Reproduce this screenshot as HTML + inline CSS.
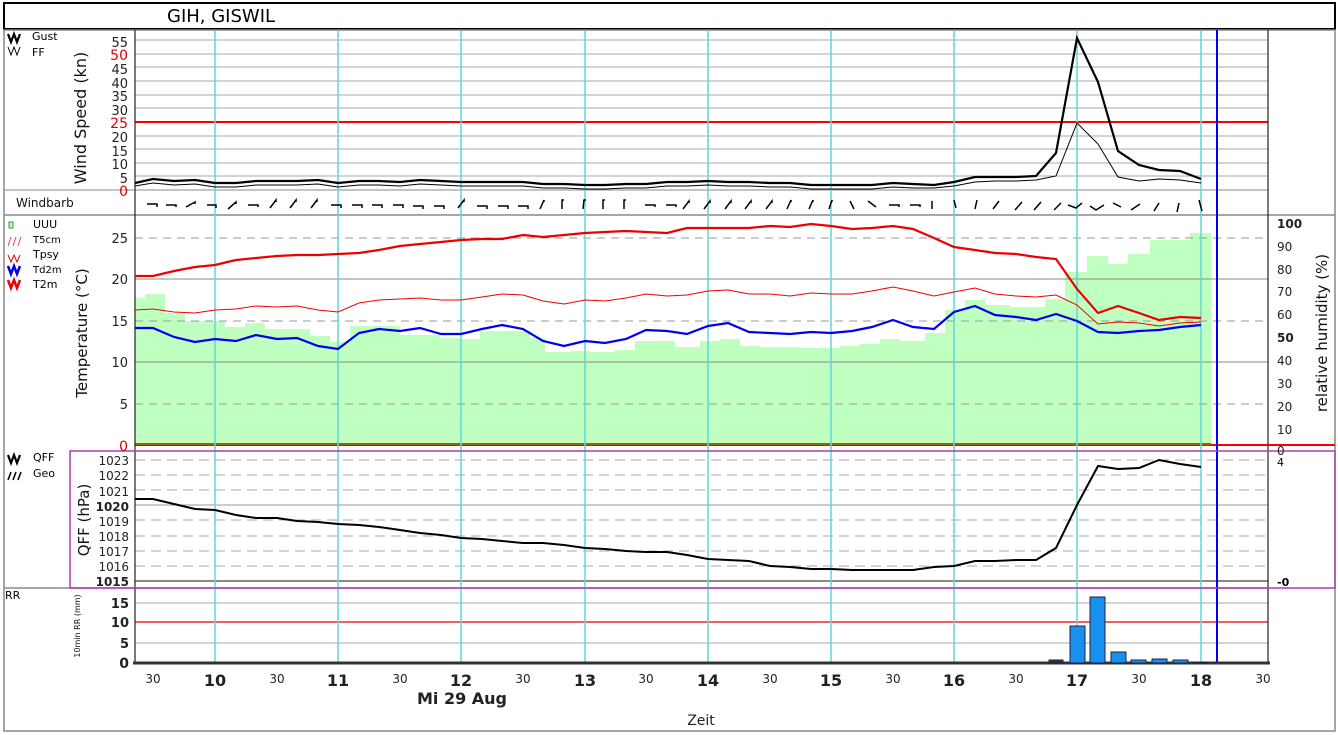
<!DOCTYPE html>
<html><head><meta charset="utf-8"><style>
html,body{margin:0;padding:0;background:#fff;}
svg{display:block;font-family:"DejaVu Sans","Liberation Sans",sans-serif;}
</style></head><body>
<svg width="1338" height="735" viewBox="0 0 1338 735" xmlns="http://www.w3.org/2000/svg">
<rect x="0" y="0" width="1338" height="735" fill="#fff"/>
<!-- title -->
<rect x="4" y="3" width="1331" height="26" fill="#fff" stroke="#000" stroke-width="2"/>
<text x="167" y="22" font-size="18" fill="#000">GIH, GISWIL</text>
<rect x="4" y="30" width="1331" height="701" fill="none" stroke="#888" stroke-width="1.5"/>

<!-- humidity bars -->
<path fill="#bfffbf" d="M135 445 V298 H145 V294 H165 V313 H185 V321 H225 V327 H245 V323 H265 V329 H310 V336 H330 V342 H350 V326 H400 V335 H440 V338 H460 V339 H480 V331 H530 V338 H545 V352 H570 V351 H590 V352 H615 V350 H635 V341 H675 V347 H700 V341 H720 V339 H740 V346 H760 V347 H800 V348 H840 V346 H860 V344 H880 V339 H900 V341 H925 V333 H945 V310 H965 V300 H985 V305 H1010 V307 H1045 V299 H1065 V272 H1087 V256 H1108 V264 H1128 V254 H1150 V240 H1190 V233 H1211 V445 Z"/>

<!-- wind grid -->
<g stroke="#aaa" stroke-width="1">
<line x1="135" y1="40" x2="1268" y2="40"/><line x1="135" y1="54" x2="1268" y2="54"/><line x1="135" y1="67" x2="1268" y2="67"/><line x1="135" y1="81" x2="1268" y2="81"/><line x1="135" y1="95" x2="1268" y2="95"/><line x1="135" y1="108" x2="1268" y2="108"/><line x1="135" y1="136" x2="1268" y2="136"/><line x1="135" y1="149" x2="1268" y2="149"/><line x1="135" y1="163" x2="1268" y2="163"/><line x1="135" y1="176" x2="1268" y2="176"/>
</g>
<line x1="135" y1="122" x2="1268" y2="122" stroke="#f00" stroke-width="2"/>
<line x1="4" y1="190" x2="1268" y2="190" stroke="#888" stroke-width="1"/>
<line x1="4" y1="215" x2="1335" y2="215" stroke="#888" stroke-width="1.5"/>

<!-- temp grid -->
<g stroke="#999" stroke-width="1" stroke-dasharray="8,6">
<line x1="135" y1="238" x2="1268" y2="238"/><line x1="135" y1="321" x2="1268" y2="321"/><line x1="135" y1="404" x2="1268" y2="404"/>
</g>
<g stroke="#888" stroke-width="1">
<line x1="135" y1="279" x2="1268" y2="279"/><line x1="135" y1="362" x2="1268" y2="362"/>
</g>
<line x1="135" y1="445" x2="1268" y2="445" stroke="#f00" stroke-width="2"/>
<line x1="135" y1="444" x2="1211" y2="444" stroke="#a06000" stroke-width="2"/>

<!-- qff grid -->
<g stroke="#aaa" stroke-width="1" stroke-dasharray="10,6">
<line x1="135" y1="460" x2="1268" y2="460"/><line x1="135" y1="475" x2="1268" y2="475"/><line x1="135" y1="490" x2="1268" y2="490"/><line x1="135" y1="520" x2="1268" y2="520"/><line x1="135" y1="536" x2="1268" y2="536"/><line x1="135" y1="551" x2="1268" y2="551"/><line x1="135" y1="566" x2="1268" y2="566"/>
</g>
<line x1="135" y1="505" x2="1268" y2="505" stroke="#999"/>
<line x1="135" y1="581" x2="1268" y2="581" stroke="#888" stroke-width="2"/>
<line x1="4" y1="588" x2="1268" y2="588" stroke="#888" stroke-width="1.5"/>

<!-- rr grid -->
<line x1="135" y1="603" x2="1268" y2="603" stroke="#aaa"/>
<line x1="135" y1="622" x2="1268" y2="622" stroke="#e00" stroke-width="1.2"/>
<line x1="135" y1="643" x2="1268" y2="643" stroke="#aaa"/>

<!-- vertical hour lines -->
<g stroke="#5fd8d8" stroke-width="1.5">
<line x1="215" y1="30" x2="215" y2="663"/><line x1="338" y1="30" x2="338" y2="663"/><line x1="461" y1="30" x2="461" y2="663"/><line x1="585" y1="30" x2="585" y2="663"/><line x1="708" y1="30" x2="708" y2="663"/><line x1="831" y1="30" x2="831" y2="663"/><line x1="954" y1="30" x2="954" y2="663"/><line x1="1077" y1="30" x2="1077" y2="663"/><line x1="1201" y1="30" x2="1201" y2="663"/>
</g>
<line x1="1217" y1="30" x2="1217" y2="663" stroke="#0000ee" stroke-width="2"/>

<!-- axes -->
<line x1="135" y1="30" x2="135" y2="663" stroke="#222" stroke-width="1.2"/>
<line x1="1268" y1="30" x2="1268" y2="663" stroke="#222" stroke-width="1.2"/>
<line x1="133" y1="663" x2="1270" y2="663" stroke="#333" stroke-width="3"/>
<rect x="70" y="451" width="1265" height="137" fill="none" stroke="#b03cb0" stroke-width="1.5"/>
<line x1="1268" y1="445" x2="1335" y2="445" stroke="#f00" stroke-width="2"/>

<!-- wind lines -->
<polyline fill="none" stroke="#000" stroke-width="1" points="135,186 153,183 174,185 195,184 215,187 236,187 256,185 277,185 297,185 318,184 338,187 359,185 379,185 400,186 420,184 441,185 461,186 482,186 502,186 523,186 543,188 564,188 585,189 605,189 626,188 646,188 667,186 687,186 708,185 728,186 749,186 770,187 790,187 811,189 831,189 852,189 872,189 893,187 913,188 934,188 954,186 975,182 995,181 1016,181 1036,180 1056,176 1077,123 1098,144 1118,177 1139,181 1159,179 1180,180 1201,183"/>
<polyline fill="none" stroke="#000" stroke-width="2.2" points="135,183 153,179 174,181 195,180 215,183 236,183 256,181 277,181 297,181 318,180 338,183 359,181 379,181 400,182 420,180 441,181 461,182 482,182 502,182 523,182 543,184 564,184 585,185 605,185 626,184 646,184 667,182 687,182 708,181 728,182 749,182 770,183 790,183 811,185 831,185 852,185 872,185 893,183 913,184 934,185 954,182 975,177 995,177 1016,177 1036,176 1056,153 1077,38 1098,82 1118,151 1139,165 1159,170 1180,171 1201,179"/>

<!-- wind barbs -->
<g stroke="#000" stroke-width="1.5" fill="none">
<path d="M147 204h10v3M166 205h10v2M186 207l9-5v2M207 205h9v3M228 209l8-7v2M248 205h10v2M270 208l6-8v2M290 208l6-8v2M311 208l6-8v2M331 205h10v3M352 205h10v3M372 205h10v3M393 205h10v3M413 206h10v3M434 206h10v3M458 208l6-8v2M477 206h10v3M498 206h10v3M518 206h10v3M540 209l4-9v2M562 209v-9h2M583 209l1-9h2M603 209v-9h2M624 209v-9h2M645 205h10v2M666 205h10v2M683 209l6-8v2M704 209l6-8v2M725 209l6-8v2M745 209l6-8v2M766 209l6-8v2M787 209l4-9v2M809 209l4-9v2M829 209l3-9v2M850 201l4 8M868 201l8 6M889 205h10v2M910 205h10v2M932 201v8M954 200l2 8M975 209l2-9M993 209l6-8M1015 210l7-8M1034 210l7-8M1054 210l7-7M1068 205l8 3l6-5M1090 206l6 4l8-5M1113 203l8 4M1131 210l9-6M1154 211l5-8M1177 212l2-9M1199 200l3 11"/>
</g>

<!-- temperature lines -->
<polyline fill="none" stroke="#ee0000" stroke-width="1" points="135,310 153,309 174,312 195,313 215,310 236,309 256,306 277,307 297,306 318,310 338,312 359,303 379,300 400,299 420,298 441,300 461,300 482,297 502,294 523,295 543,301 564,304 585,300 605,301 626,298 646,294 667,296 687,295 708,291 728,290 749,294 770,294 790,296 811,293 831,294 852,294 872,291 893,287 913,291 934,296 954,292 975,288 995,294 1016,296 1036,297 1056,295 1077,305 1098,324 1118,322 1139,323 1159,326 1180,323 1201,322"/>
<polyline fill="none" stroke="#0000ee" stroke-width="2.2" points="135,328 153,328 174,337 195,342 215,339 236,341 256,335 277,339 297,338 318,346 338,349 359,333 379,329 400,331 420,328 441,334 461,334 482,329 502,325 523,329 543,341 564,346 585,341 605,343 626,339 646,330 667,331 687,334 708,326 728,323 749,332 770,333 790,334 811,332 831,333 852,331 872,327 893,320 913,327 934,329 954,312 975,306 995,315 1016,317 1036,320 1056,314 1077,321 1098,332 1118,333 1139,331 1159,330 1180,327 1201,325"/>
<polyline fill="none" stroke="#ee0000" stroke-width="2.2" points="135,276 153,276 174,271 195,267 215,265 236,260 256,258 277,256 297,255 318,255 338,254 359,253 379,250 400,246 420,244 441,242 461,240 482,239 502,239 523,235 543,237 564,235 585,233 605,232 626,231 646,232 667,233 687,228 708,228 728,228 749,228 770,226 790,227 811,224 831,226 852,229 872,228 893,226 913,229 934,238 954,247 975,250 995,253 1016,254 1036,257 1056,259 1077,289 1098,313 1118,306 1139,313 1159,320 1180,317 1201,318"/>

<!-- QFF line -->
<polyline fill="none" stroke="#000" stroke-width="2" points="135,499 153,499 174,504 195,509 215,510 236,515 256,518 277,518 297,521 318,522 338,524 359,525 379,527 400,530 420,533 441,535 461,538 482,539 502,541 523,543 543,543 564,545 585,548 605,549 626,551 646,552 667,552 687,555 708,559 728,560 749,561 770,566 790,567 811,569 831,569 852,570 872,570 893,570 913,570 934,567 954,566 975,561 995,561 1016,560 1036,560 1056,548 1077,505 1098,466 1118,469 1139,468 1159,460 1180,464 1201,467"/>

<!-- RR bars -->
<g fill="#1890f0" stroke="#224" stroke-width="1">
<rect x="1049" y="660" width="14" height="3" fill="#333"/>
<rect x="1070" y="626" width="15" height="37"/>
<rect x="1090" y="597" width="15" height="66"/>
<rect x="1111" y="652" width="15" height="11"/>
<rect x="1131" y="660" width="15" height="3"/>
<rect x="1152" y="659" width="15" height="4"/>
<rect x="1173" y="660" width="15" height="3"/>
<rect x="1193" y="662" width="15" height="1" fill="#333"/>
</g>

<!-- wind axis labels -->
<g font-size="13" text-anchor="end" fill="#222">
<text x="128" y="47">55</text><text x="128" y="60" fill="#d00" font-size="14">50</text><text x="128" y="74">45</text><text x="128" y="88">40</text><text x="128" y="101">35</text><text x="128" y="115">30</text><text x="128" y="128" fill="#d00" font-size="14">25</text><text x="128" y="142">20</text><text x="128" y="156">15</text><text x="128" y="169">10</text><text x="128" y="183">5</text><text x="128" y="196" fill="#d00" font-size="14">0</text>
</g>
<text transform="translate(86,118) rotate(-90)" font-size="16" text-anchor="middle" fill="#111">Wind Speed (kn)</text>
<text x="16" y="207" font-size="12" fill="#111">Windbarb</text>
<!-- wind legend -->
<path d="M8 34l3 8 3-8 3 8 3-8" stroke="#000" stroke-width="2.2" fill="none"/>
<path d="M8 47l3 8 3-8 3 8 3-8" stroke="#000" stroke-width="1" fill="none"/>
<text x="32" y="40" font-size="11">Gust</text><text x="32" y="56" font-size="11">FF</text>

<!-- temp legend -->
<rect x="9" y="222" width="4" height="6" fill="#bfffbf" stroke="#080" stroke-width=".8"/>
<text x="33" y="228" font-size="11">UUU</text>
<path d="M8 246l3-9M13 246l3-9M18 246l3-9" stroke="#e44" stroke-width="1"/>
<text x="33" y="243" font-size="10">T5cm</text>
<path d="M8 255l3 7 3-7 3 7 3-7" stroke="#e00" stroke-width="1" fill="none"/>
<text x="33" y="258" font-size="11">Tpsy</text>
<path d="M8 266l3 8 3-8 3 8 3-8" stroke="#00e" stroke-width="2.5" fill="none"/>
<text x="33" y="273" font-size="10">Td2m</text>
<path d="M8 280l3 8 3-8 3 8 3-8" stroke="#e00" stroke-width="2.5" fill="none"/>
<text x="33" y="288" font-size="11">T2m</text>

<!-- temp axis -->
<g font-size="13" text-anchor="end" fill="#222">
<text x="128" y="243">25</text><text x="128" y="284">20</text><text x="128" y="326">15</text><text x="128" y="367">10</text><text x="128" y="409">5</text><text x="128" y="451" fill="#d00" font-size="14">0</text>
</g>
<text transform="translate(87,333) rotate(-90)" font-size="15" text-anchor="middle" fill="#111">Temperature (°C)</text>
<!-- humidity axis -->
<g font-size="12" fill="#222">
<text x="1277" y="228" font-weight="bold">100</text><text x="1277" y="251">90</text><text x="1277" y="274">80</text><text x="1277" y="296">70</text><text x="1277" y="319">60</text><text x="1277" y="342" font-weight="bold">50</text><text x="1277" y="365">40</text><text x="1277" y="388">30</text><text x="1277" y="411">20</text><text x="1277" y="434">10</text><text x="1277" y="455">0</text>
</g>
<text transform="translate(1327,333) rotate(-90)" font-size="15" text-anchor="middle" fill="#111">relative humidity (%)</text>

<!-- QFF legend & axis -->
<path d="M8 455l3 8 3-8 3 8 3-8" stroke="#000" stroke-width="2.2" fill="none"/>
<path d="M8 480l3-8M13 480l3-8M18 480l3-8" stroke="#000" stroke-width="1.5"/>
<text x="33" y="461" font-size="11">QFF</text><text x="33" y="477" font-size="11">Geo</text>
<g font-size="12" text-anchor="end" fill="#222">
<text x="129" y="465">1023</text><text x="129" y="480">1022</text><text x="129" y="496">1021</text><text x="129" y="511" font-weight="bold">1020</text><text x="129" y="526">1019</text><text x="129" y="541">1018</text><text x="129" y="556">1017</text><text x="129" y="571">1016</text><text x="129" y="586" font-weight="bold">1015</text>
</g>
<text transform="translate(89,520) rotate(-90)" font-size="15" text-anchor="middle" fill="#111">QFF (hPa)</text>
<text x="1277" y="466" font-size="11">4</text>
<text x="1277" y="586" font-size="11" font-weight="bold">-0</text>

<!-- RR -->
<text x="5" y="599" font-size="11">RR</text>
<text transform="translate(80,626) rotate(-90)" font-size="8" text-anchor="middle" fill="#111">10min RR (mm)</text>
<g font-size="13" text-anchor="end" fill="#222" font-weight="bold">
<text x="129" y="608">15</text><text x="129" y="627">10</text><text x="129" y="648">5</text><text x="129" y="668" font-size="14">0</text>
</g>

<!-- x axis labels -->
<g font-size="12" text-anchor="middle" fill="#222">
<text x="153" y="683">30</text><text x="277" y="683">30</text><text x="400" y="683">30</text><text x="523" y="683">30</text><text x="646" y="683">30</text><text x="770" y="683">30</text><text x="893" y="683">30</text><text x="1016" y="683">30</text><text x="1139" y="683">30</text><text x="1263" y="683">30</text>
</g>
<g font-size="16" text-anchor="middle" fill="#222" font-weight="bold">
<text x="215" y="686">10</text><text x="338" y="686">11</text><text x="461" y="686">12</text><text x="585" y="686">13</text><text x="708" y="686">14</text><text x="831" y="686">15</text><text x="954" y="686">16</text><text x="1077" y="686">17</text><text x="1201" y="686">18</text>
</g>
<text x="462" y="704" font-size="16" font-weight="bold" text-anchor="middle" fill="#222">Mi 29 Aug</text>
<text x="701" y="725" font-size="14" text-anchor="middle" fill="#222">Zeit</text>
</svg>
</body></html>
